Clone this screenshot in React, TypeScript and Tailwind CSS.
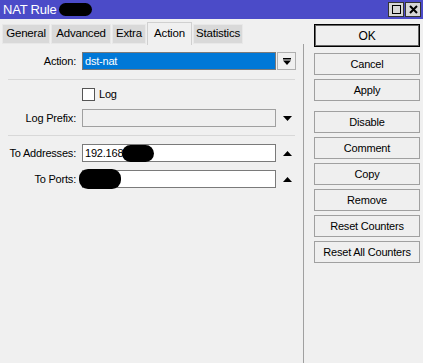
import React from "react";

const font = { fontFamily: '"Liberation Sans", Arial, sans-serif' };

function TriDown() {
  return (
    <svg width="9" height="5" viewBox="0 0 9 5" className="block">
      <path d="M0 0 H9 L4.5 5 Z" fill="#000" />
    </svg>
  );
}

function TriUp() {
  return (
    <svg width="9" height="5" viewBox="0 0 9 5" className="block">
      <path d="M0 5 H9 L4.5 0 Z" fill="#000" />
    </svg>
  );
}

function Row({ label, children }: { label: string; children: React.ReactNode }) {
  return (
    <div className="flex items-center h-[18px]">
      <div className="w-[77px] text-right text-black pr-[1px]">{label}</div>
      <div className="ml-[5px] flex items-center">{children}</div>
    </div>
  );
}

const tabs = [
  { name: "General", w: "w-[48px]" },
  { name: "Advanced", w: "w-[60px]" },
  { name: "Extra", w: "w-[34px]" },
  { name: "Action", w: "w-[45px]" },
  { name: "Statistics", w: "w-[50px]" },
];

const buttons = [
  { name: "Cancel", gap: "mt-[6px]" },
  { name: "Apply", gap: "mt-[4px]" },
  { name: "Disable", gap: "mt-[10px]" },
  { name: "Comment", gap: "mt-[4px]" },
  { name: "Copy", gap: "mt-[4px]" },
  { name: "Remove", gap: "mt-[4px]" },
  { name: "Reset Counters", gap: "mt-[4px]" },
  { name: "Reset All Counters", gap: "mt-[4px]" },
];

export default function App() {
  return (
    <div
      className="w-[423px] h-[363px] bg-[#f0f0f0] text-[11px] tracking-[-0.2px] overflow-hidden flex flex-col"
      style={font}
    >
      {/* Title bar */}
      <div className="h-[19px] bg-[#4b4bc8] flex items-center pl-[3px] pr-[2px] shrink-0">
        <span className="text-white text-[13px]">NAT Rule</span>
        <div className="ml-[2px] w-[33px] h-[13px] rounded-full bg-black" />
        <div className="ml-auto flex gap-[1px]">
          <div className="w-[16px] h-[15px] bg-[#d6d6d6] border border-[#333] flex items-center justify-center">
            <div className="w-[9px] h-[9px] border-[1.5px] border-black" />
          </div>
          <div className="w-[16px] h-[15px] bg-[#d6d6d6] border border-[#333] flex items-center justify-center">
            <svg width="9" height="9" viewBox="0 0 9 9">
              <path d="M1 1 L8 8 M8 1 L1 8" stroke="#000" strokeWidth="2" />
            </svg>
          </div>
        </div>
      </div>

      <div className="flex flex-1">
        {/* Left: tabs + form */}
        <div className="w-[304px] flex flex-col">
          <div className="h-[25px] flex items-end pl-[2px] gap-[1px]">
            {tabs.map((t) =>
              t.name === "Action" ? (
                <div
                  key={t.name}
                  className={`${t.w} h-[23px] bg-[#f0f0f0] border border-b-0 border-[#d0d0d0] flex items-center justify-center text-black text-[11.5px] -mb-[1px]`}
                >
                  {t.name}
                </div>
              ) : (
                <div
                  key={t.name}
                  className={`${t.w} h-[20px] bg-[#d9d9d9] border border-[#e8e8e8] flex items-center justify-center text-black text-[11.5px]`}
                >
                  {t.name}
                </div>
              )
            )}
          </div>

          <div className="flex-1 border-r border-[#a0a0a0] pt-[8px]">
            <Row label="Action:">
              <div className="w-[194px] h-[18px] bg-[#0078d7] border border-[#7a7a7a] text-white flex items-center pl-[2px]">
                dst-nat
              </div>
              <div className="ml-[1px] w-[19px] h-[18px] border border-[#b0b0b0] bg-[#f0f0f0] flex items-center justify-center">
                <svg width="8" height="7" viewBox="0 0 8 7" className="block">
                  <rect x="0" y="0" width="8" height="1.5" fill="#000" />
                  <path d="M0 2.5 H8 L4 7 Z" fill="#000" />
                </svg>
              </div>
            </Row>

            <div className="mt-[9px] ml-[8px] w-[287px] h-[1px] bg-[#d8d8d8]" />

            <div className="mt-[7px] h-[14px] flex items-center pl-[82px]">
              <div className="w-[13px] h-[13px] bg-white border border-[#555]" />
              <span className="ml-[4px] text-black">Log</span>
            </div>

            <div className="mt-[8px]">
              <Row label="Log Prefix:">
                <div className="w-[194px] h-[18px] bg-[#f0f0f0] border border-[#a0a0a0]" />
                <div className="ml-[7px]">
                  <TriDown />
                </div>
              </Row>
            </div>

            <div className="mt-[8px] ml-[8px] w-[287px] h-[1px] bg-[#d8d8d8]" />

            <div className="mt-[8px]">
              <Row label="To Addresses:">
                <div className="w-[194px] h-[18px] bg-white border border-[#7a7a7a] flex items-center pl-[2px] text-black">
                  192.168
                  <div className="w-[32px] h-[17px] rounded-full bg-black -ml-[1px]" />
                </div>
                <div className="ml-[7px]">
                  <TriUp />
                </div>
              </Row>
            </div>

            <div className="mt-[8px]">
              <Row label="To Ports:">
                <div className="relative w-[194px] h-[18px] bg-white border border-[#7a7a7a]">
                  <div className="absolute -left-[4px] -top-[2px] w-[42px] h-[20px] rounded-[9px] bg-black" />
                </div>
                <div className="ml-[7px]">
                  <TriUp />
                </div>
              </Row>
            </div>
          </div>
        </div>

        {/* Right: buttons */}
        <div className="flex-1 pl-[10px] pt-[5px] flex flex-col">
          <div className="w-[106px] h-[23px] bg-[#efefef] border border-black shadow-[inset_0_0_0_1px_#666] flex items-center justify-center text-black text-[12px]">
            OK
          </div>
          {buttons.map((b) => (
            <div
              key={b.name}
              className={`${b.gap} w-[106px] h-[22px] bg-[#efefef] border border-[#a0a0a0] flex items-center justify-center text-black`}
            >
              {b.name}
            </div>
          ))}
        </div>
      </div>
    </div>
  );
}
